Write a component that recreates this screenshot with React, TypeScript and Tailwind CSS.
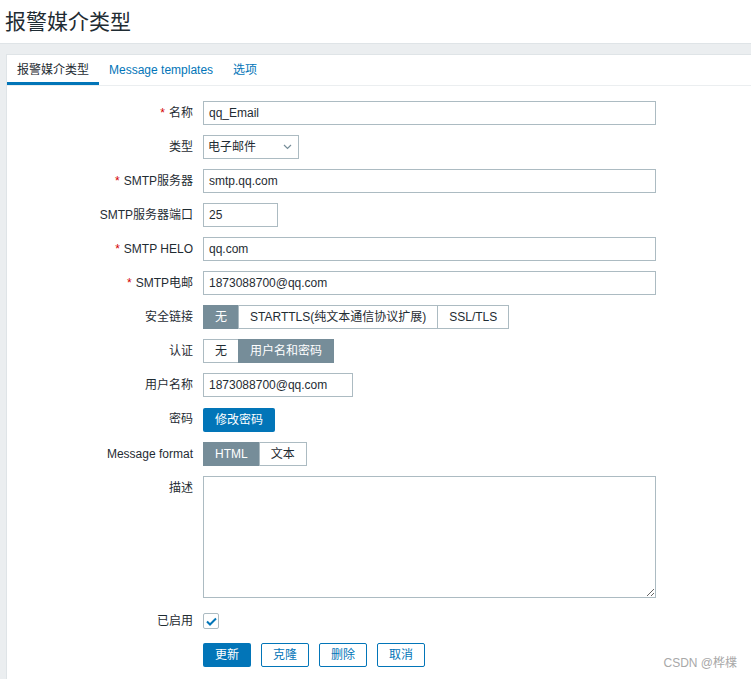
import React from 'react';

const FONT = { fontFamily: '"Liberation Sans", Arial, "Noto Sans CJK SC", sans-serif' };

function Label({ text, required, top }: { text: string; required?: boolean; top?: boolean }) {
  return (
    <div className={`flex h-[24px] items-center justify-end text-[12px] text-[#1f2c33] ${top ? 'self-start' : ''}`}>
      {required && <span className="mr-[4px] text-[#d40000]">*</span>}
      {text}
    </div>
  );
}

function TextBox({ value, width }: { value: string; width: string }) {
  return (
    <div className={`${width} flex h-[24px] items-center border border-[#acbbc2] bg-white px-[5px] text-[12px] text-[#1f2c33]`}>
      {value}
    </div>
  );
}

function Segmented({ items, active }: { items: string[]; active: number }) {
  return (
    <div className="flex h-[24px]">
      {items.map((it, i) => (
        <div
          key={it}
          className={`flex items-center border px-[11px] text-[12px] ${
            i === active
              ? 'border-[#768d99] bg-[#768d99] text-white'
              : 'border-[#acbbc2] bg-white text-[#1f2c33]'
          } ${i > 0 ? '-ml-px' : ''}`}
        >
          {it}
        </div>
      ))}
    </div>
  );
}

export default function App() {
  return (
    <div className="relative h-[679px] w-[751px] overflow-hidden bg-[#ebeef0]" style={FONT}>
      {/* header */}
      <div className="flex h-[44px] items-center border-b border-[#dfe4e7] bg-white pl-[5px]">
        <h1 className="text-[21px] font-normal leading-none text-[#1f2c33]">报警媒介类型</h1>
      </div>

      <div className="pl-[6px] pt-[10px]">
        <div className="h-[640px] border border-r-0 border-[#dfe4e7] bg-white">
          {/* tabs */}
          <div className="flex h-[31px] border-b border-[#ebeef0] text-[12px]">
            <div className="flex items-center border-b-[3px] border-[#0275b8] px-[10px] pt-[3px] text-[#1f2c33]">
              报警媒介类型
            </div>
            <div className="flex items-center px-[10px] text-[#0275b8]">Message templates</div>
            <div className="flex items-center px-[10px] text-[#0275b8]">选项</div>
          </div>

          {/* form */}
          <div className="grid grid-cols-[186px_1fr] gap-x-[10px] gap-y-[10px] pt-[15px]">
            <Label text="名称" required />
            <TextBox value="qq_Email" width="w-[453px]" />

            <Label text="类型" />
            <div className="flex h-[24px] w-[96px] items-center justify-between border border-[#acbbc2] bg-white pl-[4px] pr-[6px] text-[12px] text-[#1f2c33]">
              电子邮件
              <svg width="9" height="6" viewBox="0 0 9 6" fill="none">
                <path d="M1 1l3.5 3.5L8 1" stroke="#768d99" strokeWidth="1.2" />
              </svg>
            </div>

            <Label text="SMTP服务器" required />
            <TextBox value="smtp.qq.com" width="w-[453px]" />

            <Label text="SMTP服务器端口" />
            <TextBox value="25" width="w-[75px]" />

            <Label text="SMTP HELO" required />
            <TextBox value="qq.com" width="w-[453px]" />

            <Label text="SMTP电邮" required />
            <TextBox value="1873088700@qq.com" width="w-[453px]" />

            <Label text="安全链接" />
            <Segmented items={['无', 'STARTTLS(纯文本通信协议扩展)', 'SSL/TLS']} active={0} />

            <Label text="认证" />
            <Segmented items={['无', '用户名和密码']} active={1} />

            <Label text="用户名称" />
            <TextBox value="1873088700@qq.com" width="w-[150px]" />

            <Label text="密码" />
            <div>
              <button className="h-[24px] rounded-[2px] bg-[#0275b8] px-[12px] text-[12px] text-white">修改密码</button>
            </div>

            <Label text="Message format" />
            <Segmented items={['HTML', '文本']} active={0} />

            <Label text="描述" top />
            <textarea className="h-[122px] w-[453px] resize border border-[#acbbc2] bg-white" defaultValue="" />

            <div className="mt-[1px]">
              <Label text="已启用" />
            </div>
            <div className="mt-[1px] flex h-[24px] items-center">
              <div className="flex h-[16px] w-[16px] items-center justify-center rounded-[2px] border border-[#acbbc2] bg-white">
                <svg width="11" height="9" viewBox="0 0 11 9" fill="none">
                  <path d="M1 4.5l3 3L10 1.5" stroke="#0275b8" strokeWidth="2" />
                </svg>
              </div>
            </div>

            <div />
            <div className="flex gap-[10px]">
              <button className="h-[24px] w-[48px] rounded-[2px] bg-[#0275b8] text-[12px] text-white">更新</button>
              <button className="h-[24px] w-[48px] rounded-[2px] border border-[#0275b8] bg-white text-[12px] text-[#0275b8]">克隆</button>
              <button className="h-[24px] w-[48px] rounded-[2px] border border-[#0275b8] bg-white text-[12px] text-[#0275b8]">删除</button>
              <button className="h-[24px] w-[48px] rounded-[2px] border border-[#0275b8] bg-white text-[12px] text-[#0275b8]">取消</button>
            </div>
          </div>
        </div>
      </div>

      <div className="absolute bottom-[7px] right-[14px] text-[12px] text-[#a8a8a8]">CSDN @桦楪</div>
    </div>
  );
}
